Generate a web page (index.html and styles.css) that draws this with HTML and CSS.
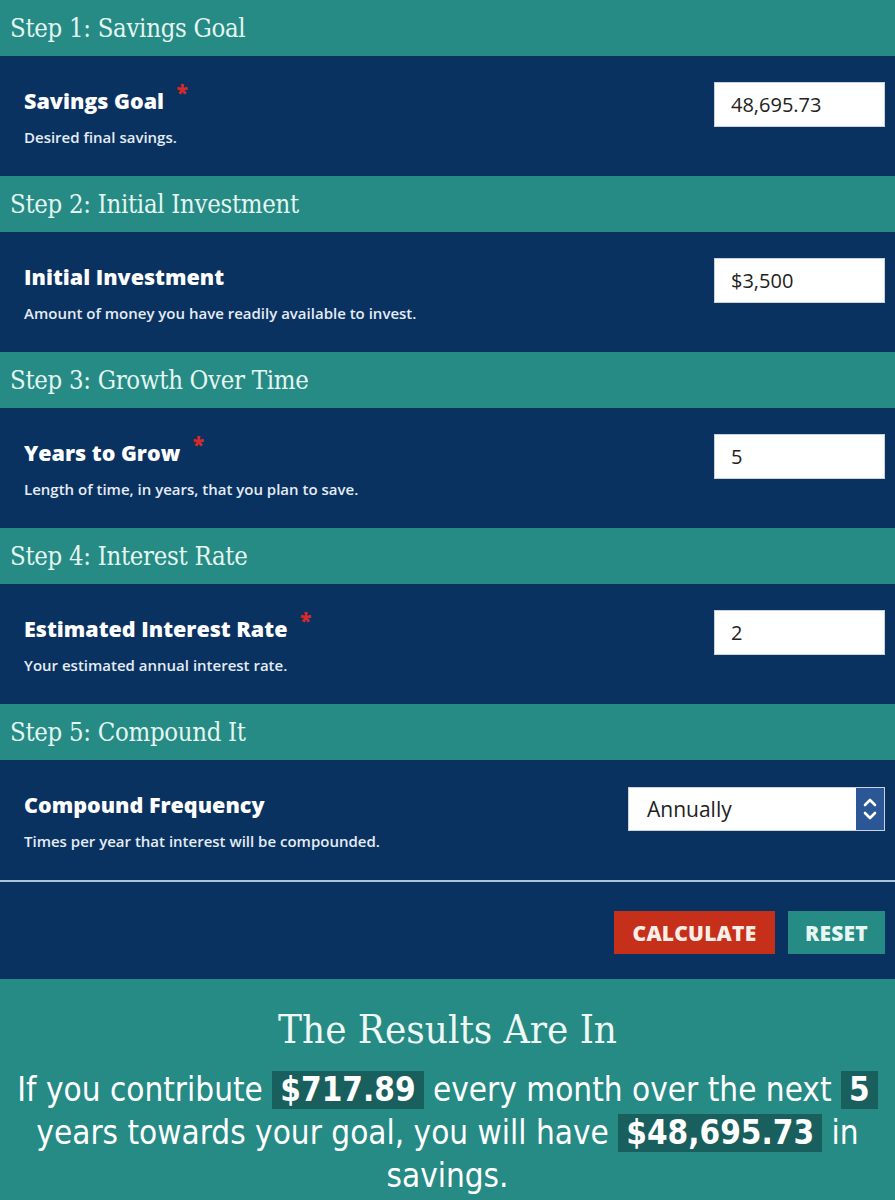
FILE: index.html
```html
<!DOCTYPE html>
<html>
<head>
<meta charset="utf-8">
<link rel="stylesheet" href="styles.css">
</head>
<body>
<div class="calc">
  <div class="step-header">Step 1: Savings Goal</div>
  <div class="field-row">
    <div class="field-text">
      <div class="field-label">Savings Goal <span class="req">*</span></div>
      <div class="field-desc">Desired final savings.</div>
    </div>
    <div class="input">48,695.73</div>
  </div>

  <div class="step-header">Step 2: Initial Investment</div>
  <div class="field-row">
    <div class="field-text">
      <div class="field-label">Initial Investment</div>
      <div class="field-desc">Amount of money you have readily available to invest.</div>
    </div>
    <div class="input">$3,500</div>
  </div>

  <div class="step-header">Step 3: Growth Over Time</div>
  <div class="field-row">
    <div class="field-text">
      <div class="field-label">Years to Grow <span class="req">*</span></div>
      <div class="field-desc">Length of time, in years, that you plan to save.</div>
    </div>
    <div class="input">5</div>
  </div>

  <div class="step-header">Step 4: Interest Rate</div>
  <div class="field-row">
    <div class="field-text">
      <div class="field-label">Estimated Interest Rate <span class="req">*</span></div>
      <div class="field-desc">Your estimated annual interest rate.</div>
    </div>
    <div class="input">2</div>
  </div>

  <div class="step-header">Step 5: Compound It</div>
  <div class="field-row">
    <div class="field-text">
      <div class="field-label">Compound Frequency</div>
      <div class="field-desc">Times per year that interest will be compounded.</div>
    </div>
    <div class="select">
      <span class="select-value">Annually</span>
      <span class="spinner">
        <svg width="20" height="34" viewBox="0 0 20 34">
          <path d="M5 13 L10 8 L15 13" fill="none" stroke="#fff" stroke-width="2.6" stroke-linecap="round" stroke-linejoin="round"/>
          <path d="M5 21 L10 26 L15 21" fill="none" stroke="#fff" stroke-width="2.6" stroke-linecap="round" stroke-linejoin="round"/>
        </svg>
      </span>
    </div>
  </div>

  <div class="actions">
    <div class="btn btn-calc">CALCULATE</div>
    <div class="btn btn-reset">RESET</div>
  </div>

  <div class="results">
    <div class="results-title">The Results Are In</div>
    <p class="results-text">If you contribute <span class="hl">$717.89</span> every month over the next <span class="hl">5</span> years towards your goal, you will have <span class="hl">$48,695.73</span> in savings.</p>
  </div>
</div>
</body>
</html>
```

FILE: styles.css
```css
html, body {
  margin: 0;
  padding: 0;
}
body {
  background: #0a3261;
  font-family: "Open Sans", "Noto Sans", sans-serif;
}
.calc {
  width: 895px;
}
.step-header {
  height: 56px;
  box-sizing: border-box;
  display: flex;
  align-items: center;
  padding-left: 10px;
  background: #268a85;
  color: #e4f6f0;
  font-family: "DejaVu Serif Condensed", "DejaVu Serif", serif;
  font-size: 25.5px;
  letter-spacing: -0.3px;
}
.field-row {
  height: 120px;
  box-sizing: border-box;
  display: flex;
  align-items: flex-start;
  justify-content: space-between;
  padding: 26px 10px 0 24px;
  background: #0a3261;
}
.field-text {
  display: flex;
  flex-direction: column;
  gap: 12px;
  margin-top: 5px;
}
.field-label {
  color: #ffffff;
  font-weight: 800;
  font-size: 21.5px;
  line-height: 28px;
}
.req {
  color: #d42a2a;
  font-size: 21px;
  position: relative;
  top: -9px;
  margin-left: 7px;
}
.field-desc {
  color: #e4ecf4;
  font-size: 15px;
  font-weight: 600;
  line-height: 20px;
}
.input {
  width: 171px;
  height: 45px;
  box-sizing: border-box;
  background: #ffffff;
  border: 1px solid #c9d3dd;
  display: flex;
  align-items: center;
  padding-left: 16px;
  color: #222;
  font-size: 20px;
  font-weight: 500;
}
.select {
  width: 257px;
  height: 44px;
  box-sizing: border-box;
  background: #ffffff;
  border: 1px solid #c9d3dd;
  display: flex;
  align-items: stretch;
  justify-content: space-between;
  margin-top: 1px;
}
.select-value {
  display: flex;
  align-items: center;
  padding-left: 18px;
  color: #222;
  font-size: 21px;
  font-weight: 500;
}
.spinner {
  width: 28px;
  background: #2b5797;
  display: flex;
  align-items: center;
  justify-content: center;
}
.actions {
  height: 99px;
  box-sizing: border-box;
  border-top: 2px solid #a9c4dc;
  display: flex;
  justify-content: flex-end;
  align-items: center;
  gap: 13px;
  padding: 4px 10px 0 0;
}
.btn {
  height: 43px;
  display: flex;
  align-items: center;
  justify-content: center;
  color: #fbeee8;
  font-weight: 800;
  font-size: 21px;
  letter-spacing: 0.2px;
}
.btn-calc {
  width: 161px;
  background: #c6301a;
}
.btn-reset {
  width: 97px;
  background: #268a85;
  color: #e8f6f2;
}
.results {
  background: #268a85;
  min-height: 222px;
  box-sizing: border-box;
  padding: 26px 10px 10px;
  text-align: center;
  color: #ffffff;
}
.results-title {
  font-family: "DejaVu Serif Condensed", "DejaVu Serif", serif;
  font-size: 40px;
  line-height: 48px;
  color: #eef8f4;
}
.results-text {
  margin: 15px 0 0;
  font-family: "DejaVu Sans Condensed", "DejaVu Sans", sans-serif;
  font-size: 33px;
  line-height: 43px;
}
.hl {
  display: inline-block;
  line-height: 38px;
  background: #195f5d;
  font-weight: bold;
  padding: 0 8px;
}
```
